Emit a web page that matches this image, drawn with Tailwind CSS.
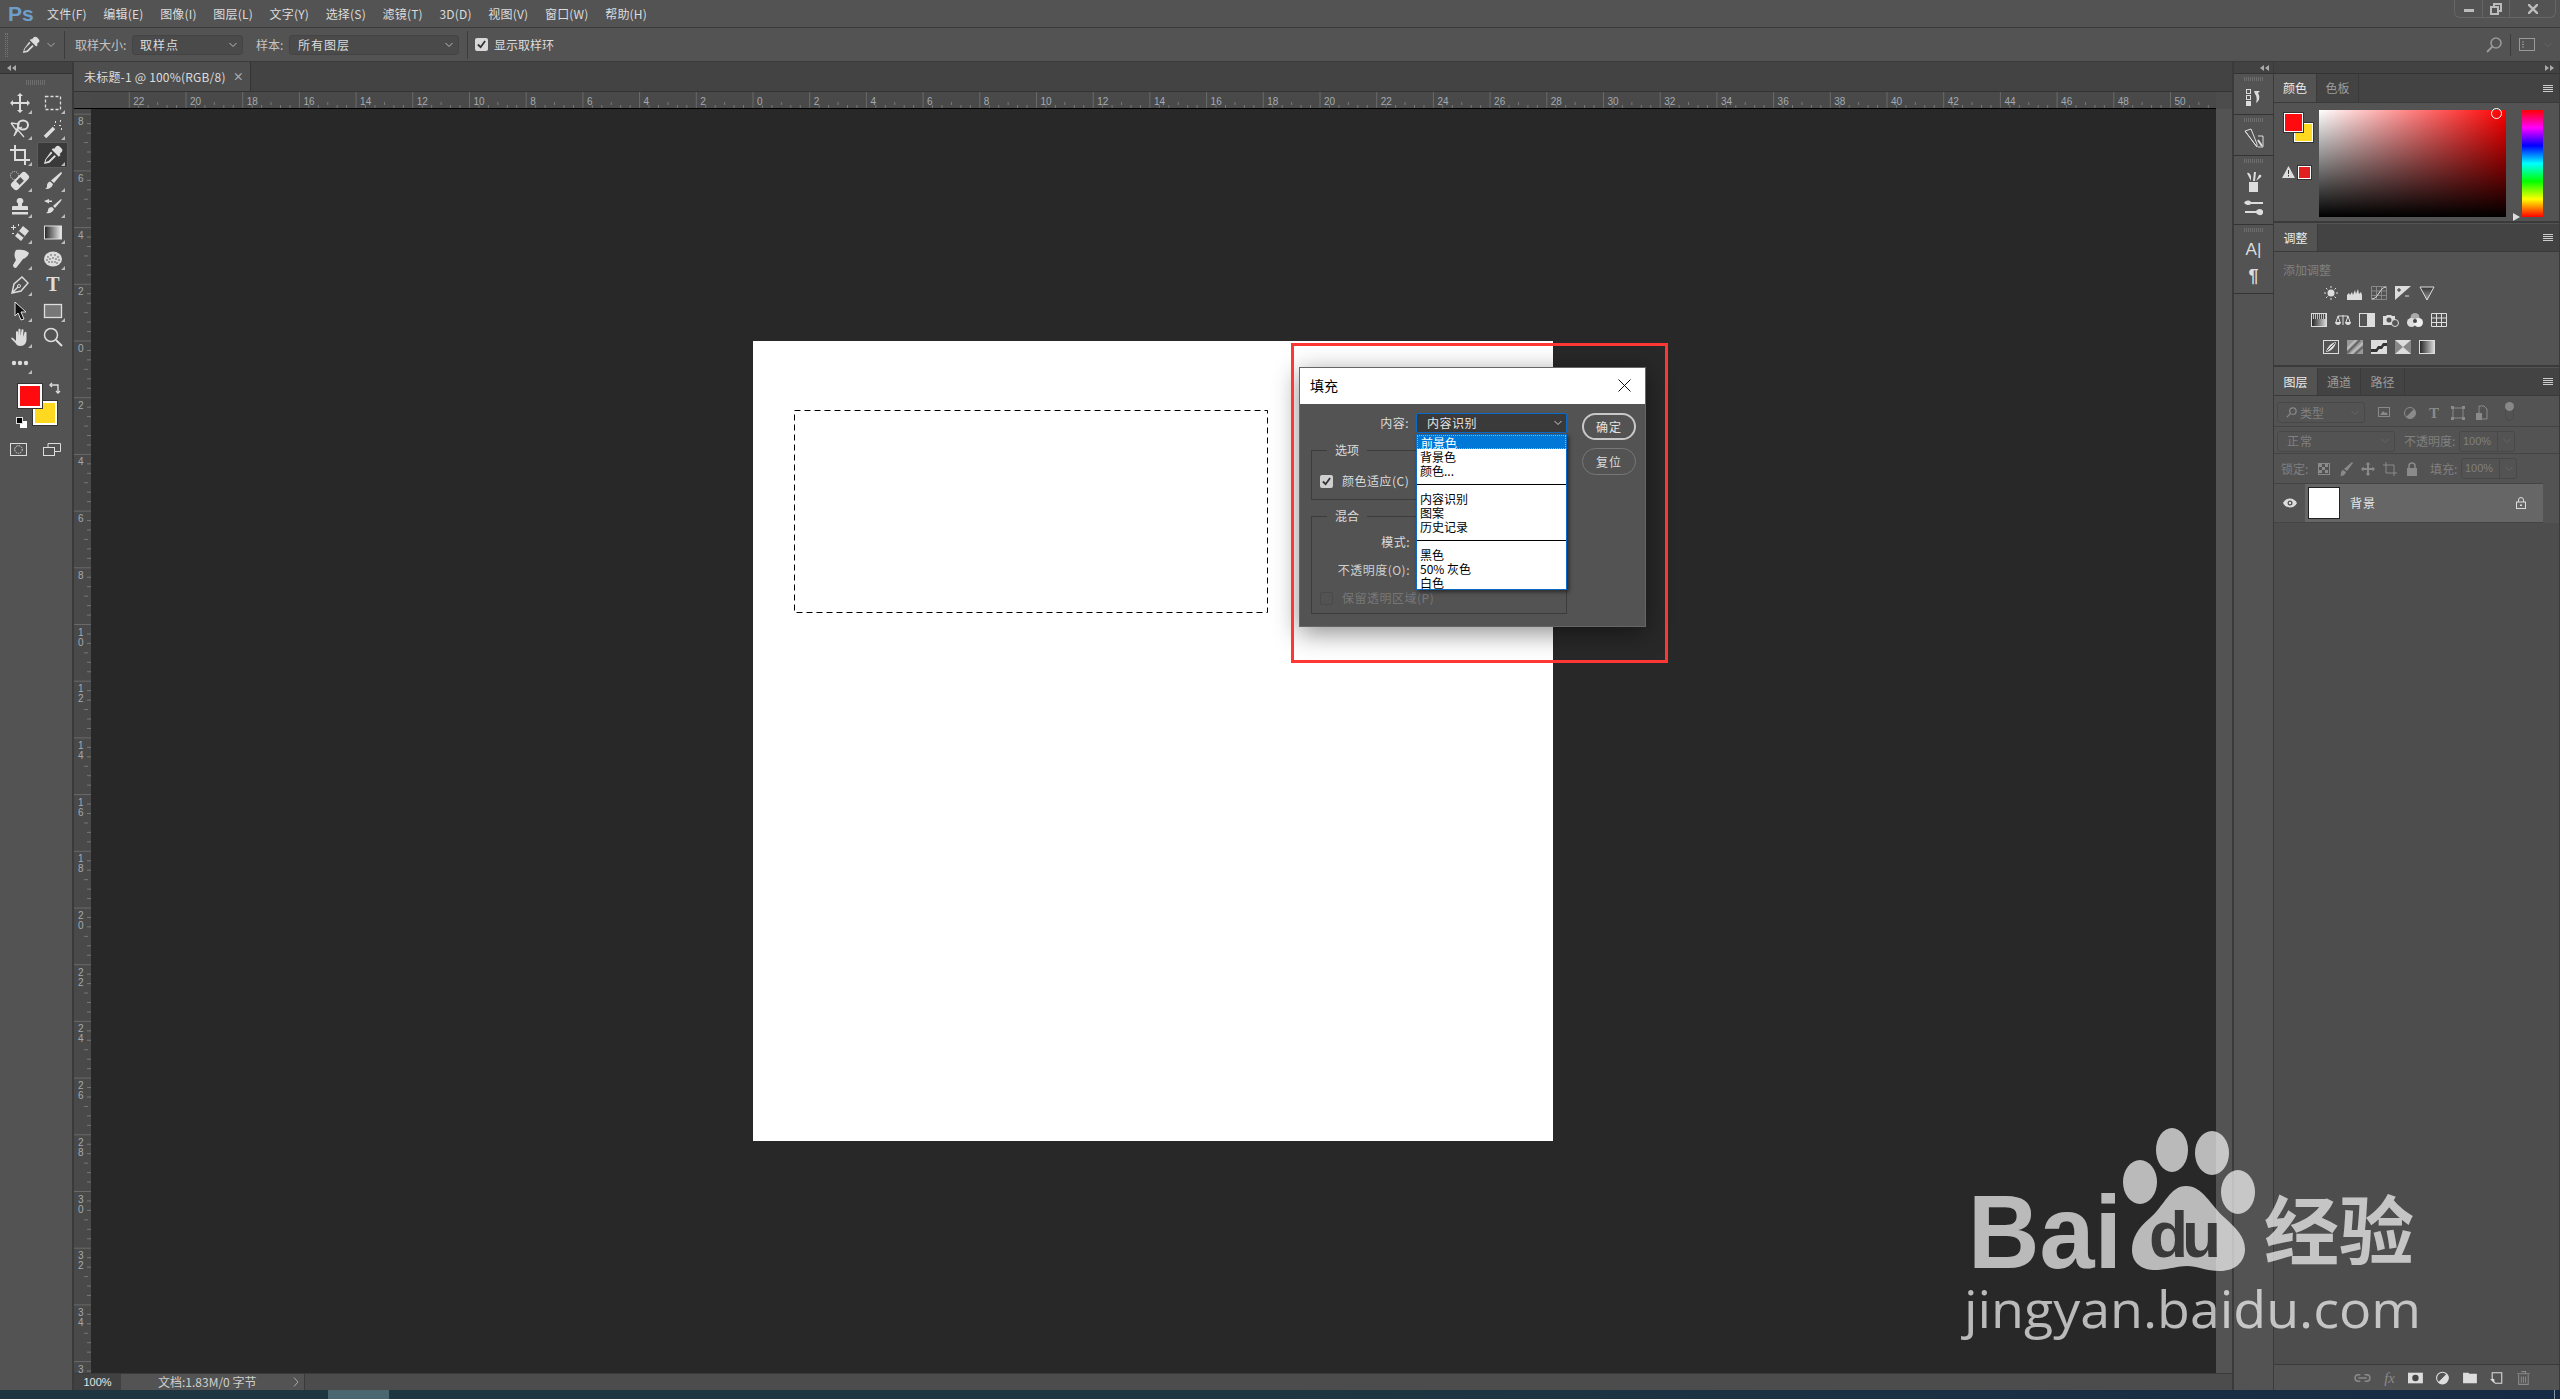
<!DOCTYPE html>
<html lang="zh-CN">
<head>
  <meta charset="UTF-8" />
  <title>Photoshop - 填充</title>
  <script src="https://cdn.jsdelivr.net/npm/@tailwindcss/browser@4"></script>
</head>
<body class="bg-[#535353] text-[#d6d6d6] text-[12px] font-['Noto_Sans_CJK_SC','Noto_Sans',sans-serif]">
<div class="relative flex h-[1399px] w-[2560px] flex-col overflow-hidden">

  <!-- Menu bar -->
  <header class="flex h-[28px] shrink-0 items-center border-b border-[#3a3a3a] bg-[#535353]">
    <div class="w-[47px] pl-[8px] font-['Liberation_Sans',sans-serif] text-[21px] leading-none font-bold text-[#6e9fcc]">Ps</div>
    <nav class="flex gap-[16.6px] text-[12px] tracking-[0.2px] text-[#dcdcdc]">
      <span>文件(F)</span><span>编辑(E)</span><span>图像(I)</span><span>图层(L)</span><span>文字(Y)</span><span>选择(S)</span><span>滤镜(T)</span><span>3D(D)</span><span>视图(V)</span><span>窗口(W)</span><span>帮助(H)</span>
    </nav>
    <div class="ml-auto mr-[4px] mb-[9px] flex h-[18px] w-[102px] rounded-b-md border border-t-0 border-[#666] text-[#bbb]">
      <div class="flex w-[28px] items-center justify-center border-r border-[#666]"><div class="mt-[4px] h-[3px] w-[10px] bg-[#bbb]"></div></div>
      <div class="flex w-[27px] items-center justify-center border-r border-[#666]">
        <svg class="h-[12px] w-[12px]" viewBox="0 0 12 12" fill="none" stroke="#bbb" stroke-width="2"><rect x="1" y="4" width="7" height="7"/><path d="M4 4V1h7v7H8"/></svg>
      </div>
      <div class="flex flex-1 items-center justify-center">
        <svg class="h-[10px] w-[10px]" viewBox="0 0 10 10" stroke="#bbb" stroke-width="2.4"><path d="M0 0l10 10M10 0L0 10"/></svg>
      </div>
    </div>
  </header>

  <!-- Options bar -->
  <section class="flex h-[34px] shrink-0 items-center border-b border-[#3a3a3a] bg-[#535353]">
    <div class="ml-[5px] h-[24px] w-[3px] border-x border-dotted border-[#777]"></div>
    <svg class="ml-[14px] h-[18px] w-[18px]" viewBox="0 0 20 20" fill="#dcdcdc"><path d="M13 1.500c1-1 2.600-1 3.600 0l2 2c1 1 1 2.500 0 3.500l-2 2 1 1-1.800 1.800-7-7L10 3l1 1z"/><path d="M8 6.500l1.400 1.400L3.500 14l-1 3 3-1 6-6 1.400 1.400-6.400 6.400L1 19l1.200-4.600z"/></svg>
    <svg class="ml-[7px] h-[6px] w-[8px]" viewBox="0 0 8 6" fill="none" stroke="#aaa"><path d="M.5 1L4 4.500 7.500 1"/></svg>
    <div class="ml-[9px] h-[28px] w-px bg-[#3c3c3c]"></div>
    <span class="ml-[10px] w-[52px] whitespace-nowrap pt-[1px] text-[#c4c4c4]">取样大小:</span>
    <div class="ml-[5px] flex h-[20px] w-[111px] items-center justify-between rounded-[3px] border border-[#444] bg-[#4a4a4a] pl-[7px] pr-[5px] text-[#dcdcdc]"><span class="tracking-[1px]">取样点</span><svg class="h-[6px] w-[8px]" viewBox="0 0 8 6" fill="none" stroke="#bbb"><path d="M.5 1L4 4.500 7.500 1"/></svg></div>
    <span class="ml-[13px] w-[28px] whitespace-nowrap pt-[1px] text-[#c4c4c4]">样本:</span>
    <div class="ml-[5px] flex h-[20px] w-[170px] items-center justify-between rounded-[3px] border border-[#444] bg-[#4a4a4a] pl-[8px] pr-[5px] text-[#dcdcdc]"><span class="tracking-[1px]">所有图层</span><svg class="h-[6px] w-[8px]" viewBox="0 0 8 6" fill="none" stroke="#bbb"><path d="M.5 1L4 4.500 7.500 1"/></svg></div>
    <div class="ml-[8px] h-[28px] w-px bg-[#3c3c3c]"></div>
    <div class="ml-[7px] flex h-[13px] w-[13px] items-center justify-center rounded-[2px] bg-[#d8d8d8]"><svg class="h-[9px] w-[9px]" viewBox="0 0 10 10" fill="none" stroke="#333" stroke-width="2"><path d="M1 5l3 3 5-7"/></svg></div>
    <span class="ml-[6px] pt-[1px] text-[#dcdcdc]">显示取样环</span>
    <svg class="ml-auto h-[16px] w-[16px]" viewBox="0 0 16 16" fill="none" stroke="#999" stroke-width="1.600"><circle cx="10" cy="6" r="5"/><path d="M6.500 9.500L1 15" stroke-width="2"/></svg>
    <div class="ml-[8px] h-[22px] w-px bg-[#3c3c3c]"></div>
    <svg class="ml-[8px] h-[13px] w-[16px]" viewBox="0 0 16 13" fill="none" stroke="#999"><rect x=".5" y=".5" width="15" height="12"/><path d="M3 4h2M3 6.500h2M3 9h2"/></svg>
    <svg class="ml-[9px] mr-[8px] h-[6px] w-[8px]" viewBox="0 0 8 6" fill="none" stroke="#666"><path d="M.5 1L4 4.500 7.500 1"/></svg>
  </section>

  <main class="flex min-h-0 flex-1">
    <!-- Tools -->
    <aside class="flex w-[72px] shrink-0 flex-col bg-[#535353]">
      <div class="flex h-[12px] shrink-0 items-center border-b border-[#333] bg-[#424242] pl-[7px]"><svg class="h-[6px] w-[9px]" viewBox="0 0 9 6" fill="#aaa"><path d="M4 0v6L0 3zM9 0v6L5 3z"/></svg></div>
      <div class="flex h-[16px] shrink-0 items-center justify-center"><div class="h-[5px] w-[20px] bg-[repeating-linear-gradient(to_right,#6e6e6e_0,#6e6e6e_1px,transparent_1px,transparent_2px)]"></div></div>
      <div id="tools" class="grid grid-cols-[33px_33px] pl-[3px]"></div>
      <!-- Foreground / background swatches -->
      <div class="relative mt-[8px] h-[50px] shrink-0">
        <div class="absolute left-[33px] top-[17px] h-[24px] w-[24px] border-2 border-white bg-[#ffd91f] outline outline-[#333]"></div>
        <div class="absolute left-[18px] top-0 h-[24px] w-[24px] border-2 border-white bg-[#ff0a0f] outline outline-[#333]"></div>
        <svg class="absolute left-[49px] top-[-2px] h-[12px] w-[12px]" viewBox="0 0 12 12" fill="none" stroke="#ddd" stroke-width="1.400"><path d="M1 3h8v8"/><path d="M3 1L1 3l2 2M7 9l2 2 2-2"/></svg>
        <div class="absolute left-[20px] top-[37px] h-[7px] w-[7px] bg-white"></div>
        <div class="absolute left-[16px] top-[33px] h-[7px] w-[7px] border border-[#ddd] bg-black"></div>
      </div>
      <div class="mt-[3px] flex h-[24px] items-center">
        <svg class="ml-[10px] h-[13px] w-[17px]" viewBox="0 0 17 13" fill="none" stroke="#ddd"><rect x=".5" y=".5" width="16" height="12"/><circle cx="8.500" cy="6.500" r="3.800" stroke-dasharray="1.500 1"/></svg>
        <svg class="ml-[16px] h-[13px] w-[18px]" viewBox="0 0 18 13" fill="none" stroke="#ddd"><rect x=".5" y="4.500" width="11" height="8"/><path d="M5 4V.5h12.500v8H12"/></svg>
      </div>
    </aside>
    <div class="w-[2px] shrink-0 bg-[#3a3a3a]"></div>

    <!-- Document area -->
    <div class="flex w-[2158px] shrink-0 flex-col">
      <div class="flex h-[30px] shrink-0 border-b border-[#333] bg-[#434343]">
        <div class="flex w-[177px] items-center border-r border-[#333] bg-[#4e4e4e] pl-[10px] text-[#dcdcdc]">
          <span class="whitespace-nowrap text-[12px] tracking-[0.2px]">未标题-1 @ 100%(RGB/8)</span>
          <span class="ml-[7px] text-[11px] font-bold text-[#aaa]">×</span>
        </div>
      </div>
      <div class="flex h-[17px] shrink-0">
        <div class="w-[17px] border-b border-black bg-[#4a4a4a]"></div>
        <div class="flex-1 overflow-hidden border-b border-black bg-[#494949]"><svg id="ruler-top" class="block h-[16px] w-[2125px]"></svg></div>
        <div class="w-[16px] bg-[#4c4c4c]"></div>
      </div>
      <div class="flex min-h-0 flex-1">
        <div class="w-[17px] overflow-hidden bg-[#494949]"><svg id="ruler-left" class="block h-[1264px] w-[17px]"></svg></div>
        <div class="flex-1 overflow-hidden bg-[#282828] pl-[662px] pt-[232px]">
          <div class="relative h-[800px] w-[800px] bg-white">
            <svg class="absolute left-[41px] top-[69px] h-[204px] w-[474px]" viewBox="0 0 474 204" fill="none" stroke="#000"><rect x=".5" y=".5" width="473" height="202" stroke-dasharray="6 4"/></svg>
          </div>
        </div>
        <div class="w-[16px] bg-[#535353]"></div>
      </div>
      <div class="flex h-[17px] shrink-0 border-t border-[#3a3a3a] bg-[#4c4c4c]">
        <div class="flex w-[47px] items-center justify-center bg-[#414141] font-['Liberation_Sans',sans-serif] text-[11px] text-[#e4e4e4]">100%</div>
        <div class="flex w-[184px] items-center border-r border-[#3a3a3a] bg-[#535353] pl-[37px] text-[#cfcfcf]">文档:1.83M/0 字节<svg class="ml-auto mr-[5px] h-[10px] w-[6px]" viewBox="0 0 6 10" fill="none" stroke="#aaa"><path d="M1 .5L5 5 1 9.500"/></svg></div>
      </div>
    </div>
    <div class="w-[2px] shrink-0 bg-[#3a3a3a]"></div>

    <!-- Collapsed dock -->
    <aside class="flex w-[39px] shrink-0 flex-col bg-[#535353]">
      <div class="flex h-[12px] shrink-0 items-center justify-end border-b border-[#333] bg-[#424242] pr-[4px]"><svg class="h-[6px] w-[9px]" viewBox="0 0 9 6" fill="#aaa"><path d="M4 0v6L0 3zM9 0v6L5 3z"/></svg></div>
      <div class="flex h-[41px] flex-col items-center border-b border-[#333] pt-[3px]">
        <div class="h-[4px] w-[19px] bg-[repeating-linear-gradient(to_right,#6e6e6e_0,#6e6e6e_1px,transparent_1px,transparent_2px)]"></div>
        <svg class="mt-[8px] h-[17px] w-[16px]" viewBox="0 0 16 17" fill="#ddd"><rect x=".5" y=".5" width="4" height="4" fill="none" stroke="#ddd"/><rect x=".5" y="6.500" width="4" height="4" fill="none" stroke="#ddd"/><rect x="0" y="12" width="5" height="5"/><path d="M8 2h6l-2 2c2 3 2 8-2 10 1-3 1-7-1-9z"/></svg>
      </div>
      <div class="flex h-[41px] flex-col items-center border-b border-[#333] pt-[3px]">
        <div class="h-[4px] w-[19px] bg-[repeating-linear-gradient(to_right,#6e6e6e_0,#6e6e6e_1px,transparent_1px,transparent_2px)]"></div>
        <svg class="mt-[6px] h-[20px] w-[20px]" viewBox="0 0 20 20" fill="none" stroke="#ddd"><path d="M1 3l6-2 6 15v3zM1 3l12 16M14 8h5v11h-5"/><path d="M14 12l4 6" stroke-width="2"/></svg>
      </div>
      <div class="flex h-[69px] flex-col items-center border-b border-[#333] pt-[3px]">
        <div class="h-[4px] w-[19px] bg-[repeating-linear-gradient(to_right,#6e6e6e_0,#6e6e6e_1px,transparent_1px,transparent_2px)]"></div>
        <svg class="mt-[8px] h-[21px] w-[16px]" viewBox="0 0 16 21" fill="#ddd"><rect x="3" y="11" width="9" height="10"/><path d="M5 10L1 2c2-1 3 1 4 3zM7 10l1-9 2 0-1 9zM10 10l3-6c2-1 3 1 2 2z"/></svg>
        <svg class="mt-[8px] h-[16px] w-[19px]" viewBox="0 0 19 16" fill="#ddd"><path d="M0 3c2-3 5-3 7-1h12v2H7C5 6 2 5 0 3zM19 13c-1 3-4 3-7 0H1v-2h11c3-3 6-2 7 0z"/></svg>
      </div>
      <div class="flex h-[69px] flex-col items-center border-b border-[#333] pt-[3px]">
        <div class="h-[4px] w-[19px] bg-[repeating-linear-gradient(to_right,#6e6e6e_0,#6e6e6e_1px,transparent_1px,transparent_2px)]"></div>
        <div class="mt-[6px] font-['Liberation_Sans',sans-serif] text-[17px] leading-[24px] text-[#ddd]">A<span class="font-thin">|</span></div>
        <div class="mt-[3px] font-['Liberation_Sans',sans-serif] text-[18px] leading-[22px] font-bold text-[#ddd]">¶</div>
      </div>
    </aside>
    <div class="w-px shrink-0 bg-[#3a3a3a]"></div>

    <!-- Panels -->
    <aside class="flex min-w-0 flex-1 flex-col border-r border-[#3a3a3a] bg-[#535353]">
      <div class="flex h-[12px] shrink-0 items-center justify-end border-b border-[#333] bg-[#424242] pr-[5px]"><svg class="h-[6px] w-[9px]" viewBox="0 0 9 6" fill="#aaa"><path d="M0 0v6l4-3zM5 0v6l4-3z"/></svg></div>

      <!-- Color -->
      <section class="h-[149px] shrink-0 border-b-2 border-[#3a3a3a]">
        <div class="flex h-[29px] items-stretch border-b border-[#3a3a3a] bg-[#434343]">
          <div class="flex w-[43px] items-center justify-center border-r border-[#3a3a3a] bg-[#535353] text-[#ececec]">颜色</div>
          <div class="flex w-[42px] items-center justify-center border-r border-[#3a3a3a] text-[#9c9c9c]">色板</div>
          <div class="ml-auto mr-[6px] flex flex-col justify-center gap-[1px]"><div class="h-px w-[10px] bg-[#ccc]"></div><div class="h-px w-[10px] bg-[#ccc]"></div><div class="h-px w-[10px] bg-[#ccc]"></div><div class="h-px w-[10px] bg-[#ccc]"></div></div>
        </div>
        <div class="flex pt-[7px]">
          <div class="relative w-[45px] shrink-0">
            <div class="absolute left-[20px] top-[13px] h-[19px] w-[19px] border border-white bg-[#ffd91f] outline outline-[#333]"></div>
            <div class="absolute left-[10px] top-[3px] h-[19px] w-[19px] border border-white bg-[#ff0a0f] outline outline-[#333]"></div>
            <svg class="absolute left-[8px] top-[56px] h-[12px] w-[13px]" viewBox="0 0 13 12" fill="#ddd"><path d="M6.500 0L13 12H0z"/><path d="M6 4h1v4H6zM6 9h1v1.500H6z" fill="#333"/></svg>
            <div class="absolute left-[24px] top-[56px] h-[13px] w-[13px] border border-white bg-[#e32020] outline outline-[#333]"></div>
          </div>
          <div class="relative h-[107px] w-[187px] shrink-0 bg-[linear-gradient(to_top,#000,transparent),linear-gradient(to_right,#fff,#f00)]">
            <div class="absolute left-[172px] top-[-2px] h-[11px] w-[11px] rounded-full border border-white"></div>
          </div>
          <div class="relative ml-[16px] h-[107px] w-[21px] shrink-0 bg-[linear-gradient(to_bottom,#f00,#f0f,#00f,#0ff,#0f0,#ff0,#f00)]">
            <div class="absolute left-[-9px] top-[103px] h-[8px] w-[7px] bg-[#ddd] [clip-path:polygon(0_0,100%_50%,0_100%)]"></div>
          </div>
        </div>
      </section>

      <!-- Adjustments -->
      <section class="mt-[1px] h-[143px] shrink-0 border-b-2 border-[#3a3a3a]">
        <div class="flex h-[28px] items-stretch border-b border-[#3a3a3a] bg-[#434343]">
          <div class="flex w-[44px] items-center justify-center border-r border-[#3a3a3a] bg-[#535353] pt-[1px] text-[#ececec]">调整</div>
          <div class="ml-auto mr-[6px] flex flex-col justify-center gap-[1px]"><div class="h-px w-[10px] bg-[#ccc]"></div><div class="h-px w-[10px] bg-[#ccc]"></div><div class="h-px w-[10px] bg-[#ccc]"></div><div class="h-px w-[10px] bg-[#ccc]"></div></div>
        </div>
        <div class="pl-[9px] pt-[10px] text-[#808080] leading-[16px]">添加调整</div>
        <div id="adj" class="mt-[8px] flex flex-col gap-[13px]"></div>
      </section>

      <!-- Layers -->
      <section class="mt-[1px] flex min-h-0 flex-1 flex-col">
        <div class="flex h-[28px] shrink-0 items-stretch border-b border-[#3a3a3a] bg-[#434343]">
          <div class="flex w-[44px] items-center justify-center border-r border-[#3a3a3a] bg-[#535353] text-[#ececec]">图层</div>
          <div class="flex w-[43px] items-center justify-center border-r border-[#3a3a3a] text-[#9c9c9c]">通道</div>
          <div class="flex w-[44px] items-center justify-center border-r border-[#3a3a3a] text-[#9c9c9c]">路径</div>
          <div class="ml-auto mr-[6px] flex flex-col justify-center gap-[1px]"><div class="h-px w-[10px] bg-[#ccc]"></div><div class="h-px w-[10px] bg-[#ccc]"></div><div class="h-px w-[10px] bg-[#ccc]"></div><div class="h-px w-[10px] bg-[#ccc]"></div></div>
        </div>
        <div class="flex h-[31px] shrink-0 items-center border-b border-[#444] pl-[3px] pt-[3px]">
          <div class="flex h-[21px] w-[88px] items-center gap-[3px] rounded-[3px] border border-[#484848] pl-[8px] text-[#808080]">
            <svg class="h-[11px] w-[11px]" viewBox="0 0 12 12" fill="none" stroke="#888" stroke-width="1.400"><circle cx="7.500" cy="4.500" r="3.500"/><path d="M5 7l-4 4"/></svg><span>类型</span>
            <svg class="ml-auto mr-[5px] h-[6px] w-[8px]" viewBox="0 0 8 6" fill="none" stroke="#666"><path d="M.5 1L4 4.500 7.500 1"/></svg>
          </div>
          <div id="filters" class="ml-[13px] flex items-center gap-[8px]"></div>
          <div class="relative ml-[15px] h-[17px] w-[9px] rounded-full border border-[#4a4a4a]"><div class="absolute left-[-1px] top-[-3px] h-[9px] w-[9px] rounded-full bg-[#888]"></div></div>
        </div>
        <div class="flex h-[27px] shrink-0 items-center border-b border-[#444] pl-[3px] pt-[2px] text-[#808080]">
          <div class="flex h-[21px] w-[118px] items-center justify-between rounded-[3px] border border-[#484848] pl-[9px] pr-[5px]"><span class="tracking-[1px]">正常</span><svg class="h-[6px] w-[8px]" viewBox="0 0 8 6" fill="none" stroke="#666"><path d="M.5 1L4 4.500 7.500 1"/></svg></div>
          <span class="ml-[9px] w-[55px] whitespace-nowrap">不透明度:</span>
          <div class="flex h-[21px] w-[56px] items-center rounded-[3px] border border-[#484848] font-['Liberation_Sans',sans-serif] text-[11px]"><span class="w-[38px] border-r border-[#484848] pl-[3px] leading-[19px]">100%</span><svg class="ml-[5px] h-[6px] w-[8px]" viewBox="0 0 8 6" fill="none" stroke="#666"><path d="M.5 1L4 4.500 7.500 1"/></svg></div>
        </div>
        <div class="flex h-[29px] shrink-0 items-center pl-[7px] text-[#808080]">
          <span class="w-[36px] whitespace-nowrap">锁定:</span>
          <div id="locks" class="flex items-center gap-[8px]"></div>
          <span class="ml-[11px] w-[31px] whitespace-nowrap">填充:</span>
          <div class="flex h-[21px] w-[56px] items-center rounded-[3px] border border-[#484848] font-['Liberation_Sans',sans-serif] text-[11px]"><span class="w-[38px] border-r border-[#484848] pl-[3px] leading-[19px]">100%</span><svg class="ml-[5px] h-[6px] w-[8px]" viewBox="0 0 8 6" fill="none" stroke="#666"><path d="M.5 1L4 4.500 7.500 1"/></svg></div>
        </div>
        <div class="flex h-[40px] w-[269px] shrink-0 items-stretch border-y border-[#444]">
          <div class="flex w-[31px] items-center justify-center">
            <svg class="h-[10px] w-[14px]" viewBox="0 0 14 10" fill="#ddd"><path d="M0 5c3-6 11-6 14 0-3 6-11 6-14 0z"/><circle cx="7" cy="5" r="2.500" fill="#535353"/><circle cx="7" cy="5" r="1.200"/></svg>
          </div>
          <div class="flex flex-1 items-center bg-[#666]">
            <div class="ml-[3px] h-[32px] w-[32px] border border-[#222] bg-white"></div>
            <span class="ml-[10px] tracking-[1px] text-[#e8e8e8]">背景</span>
            <svg class="ml-auto mr-[17px] h-[12px] w-[10px]" viewBox="0 0 10 12" fill="none" stroke="#ddd"><path d="M2.500 5V3a2.500 2.500 0 015 0v2"/><rect x=".5" y="5" width="9" height="6.500"/><path d="M5 7.500v1.500" stroke-width="2"/></svg>
          </div>
        </div>
        <div class="flex-1 bg-[#4d4d4d]"></div>
        <div id="layer-actions" class="flex h-[26px] shrink-0 items-center justify-end gap-[10px] border-t border-[#3a3a3a] pr-[26px]"></div>
      </section>
    </aside>
  </main>

  <!-- Windows taskbar, mostly cut off -->
  <footer class="relative flex h-[9px] shrink-0 overflow-hidden bg-[linear-gradient(to_right,#1e3641,#1e3641_50%,#172a45)]">
    <div class="ml-[328px] h-full w-[61px] bg-[#4a6670]"></div>
    <span class="absolute left-[2377px] top-[7px] font-['Liberation_Sans',sans-serif] text-[14px] leading-[16px] text-white">20:20</span>
    <div class="absolute left-[2554px] top-0 h-full w-px bg-[#8892a0]"></div>
  </footer>

  <!-- Fill dialog -->
  <div class="absolute left-[1299px] top-[367px] h-[260px] w-[347px] border border-[#666] bg-[#535353] shadow-[0_6px_24px_rgba(0,0,0,0.45)]">
    <div class="flex h-[36px] items-center justify-between bg-white pb-[1px] pl-[10px] pr-[14px] text-[14px] text-black">
      <span>填充</span>
      <svg class="h-[13px] w-[13px]" viewBox="0 0 13 13" stroke="#111"><path d="M.5.500l12 12M12.500.500l-12 12"/></svg>
    </div>
    <div class="flex pl-[11px] pt-[9px]">
      <div class="relative w-[256px]">
        <div class="flex h-[20px] items-center">
          <span class="w-[98px] text-right tracking-[0.5px] text-[#dcdcdc]">内容:</span>
          <div class="ml-[7px] flex h-[20px] w-[151px] items-center justify-between rounded-[2px] border border-[#0a6ac8] bg-[#3a3a3a] pl-[10px] pr-[4px] tracking-[0.5px] text-[#e4e4e4]"><span>内容识别</span><svg class="h-[6px] w-[8px]" viewBox="0 0 8 6" fill="none" stroke="#ccc"><path d="M.5 1L4 4.500 7.500 1"/></svg></div>
        </div>
        <fieldset class="relative mt-[17px] h-[50px] border border-[#3c3c3c]">
          <span class="absolute left-[15px] top-[-10px] bg-[#535353] px-[8px] text-[#dcdcdc]">选项</span>
          <div class="flex items-center pl-[8px] pt-[21px]">
            <div class="flex h-[13px] w-[13px] items-center justify-center rounded-[2px] bg-[#cfcfcf]"><svg class="h-[9px] w-[9px]" viewBox="0 0 10 10" fill="none" stroke="#333" stroke-width="2"><path d="M1 5l3 3 5-7"/></svg></div>
            <span class="ml-[9px] tracking-[0.5px] text-[#dcdcdc]">颜色适应(C)</span>
          </div>
        </fieldset>
        <fieldset class="relative mt-[16px] h-[98px] border border-[#3c3c3c]">
          <span class="absolute left-[15px] top-[-10px] bg-[#535353] px-[8px] text-[#dcdcdc]">混合</span>
          <div class="w-[98px] pt-[16px] text-right tracking-[0.5px] text-[#dcdcdc]">模式:</div>
          <div class="w-[98px] whitespace-nowrap pt-[10px] text-right tracking-[0.5px] text-[#cfcfcf]">不透明度(O):</div>
          <div class="flex items-center pl-[8px] pt-[10px]">
            <div class="h-[13px] w-[13px] rounded-[2px] border border-[#4a4a4a]"></div>
            <span class="ml-[9px] tracking-[0.5px] text-[#777]">保留透明区域(P)</span>
          </div>
        </fieldset>
        <!-- Open dropdown -->
        <div class="absolute left-[105px] top-[21px] h-[156px] w-[151px] overflow-hidden border border-[#0a6ac8] bg-white text-[12px] leading-[14px] text-black shadow-[2px_2px_4px_rgba(0,0,0,0.5)]">
          <div class="h-[14px] border border-dotted border-[#f5a623] bg-[#0078d7] pl-[3px] leading-[14px] text-white">前景色</div>
          <div class="pl-[3px] pt-[1px]">背景色</div>
          <div class="pl-[3px]">颜色...</div>
          <div class="mb-[7px] mt-[6px] h-px bg-black"></div>
          <div class="pl-[3px]">内容识别</div>
          <div class="pl-[3px]">图案</div>
          <div class="pl-[3px]">历史记录</div>
          <div class="mb-[7px] mt-[6px] h-px bg-black"></div>
          <div class="pl-[3px]">黑色</div>
          <div class="pl-[3px]">50% 灰色</div>
          <div class="pl-[3px]">白色</div>
        </div>
      </div>
      <div class="ml-[15px] flex w-[54px] flex-col gap-[8px]">
        <div class="flex h-[27px] items-center justify-center rounded-full border-2 border-[#c8c8c8] tracking-[1px] text-[#e4e4e4]">确定</div>
        <div class="flex h-[27px] items-center justify-center rounded-full border border-[#777] tracking-[1px] text-[#dcdcdc]">复位</div>
      </div>
    </div>
  </div>

  <!-- Red highlight added to the screenshot -->
  <div class="absolute left-[1291px] top-[343px] h-[320px] w-[377px] border-[3px] border-[#ff3636]"></div>

  <!-- Watermark -->
  <svg class="absolute left-[1960px] top-[1125px] h-[225px] w-[470px]" viewBox="1960 1125 470 225">
    <g fill="#fff" opacity="0.68">
      <text x="1968" y="1268" font-family="Liberation Sans" font-weight="700" font-size="104" textLength="154" lengthAdjust="spacingAndGlyphs">Bai</text>
      <ellipse cx="2140" cy="1182" rx="17" ry="22"/>
      <ellipse cx="2172" cy="1150" rx="16" ry="22"/>
      <ellipse cx="2212" cy="1153" rx="17" ry="22"/>
      <ellipse cx="2238" cy="1192" rx="17" ry="22"/>
      <path d="M2186 1186C2170 1186 2165 1205 2150 1218C2138 1228 2132 1238 2132 1250C2132 1265 2145 1271 2158 1270C2170 1269 2178 1266 2187 1266C2197 1266 2206 1271 2220 1271C2235 1271 2245 1262 2245 1249C2245 1237 2236 1228 2225 1218C2210 1205 2203 1186 2186 1186Z"/>
      <text x="2264" y="1259" font-family="Noto Sans CJK SC" font-weight="700" font-size="75">经验</text>
      <text x="1964" y="1328" font-family="Open Sans" font-size="52" textLength="457" lengthAdjust="spacingAndGlyphs">jingyan.baidu.com</text>
    </g>
    <text x="2149" y="1257" font-family="Liberation Sans" font-weight="700" font-size="64" fill="#3a3a3a" textLength="72">du</text>
  </svg>
</div>

<script>
  // tool icons, [inner svg, has flyout corner]
  const s = 'fill="none" stroke="#ddd"';
  const tools = [
    ['<path fill="#ddd" d="M10 0l3 3h-2v6h6V7l3 3-3 3v-2h-6v6h2l-3 3-3-3h2v-6H3v2l-3-3 3-3v2h6V3H7z"/>', 1],
    [`<rect x="2.500" y="3.500" width="15" height="13" ${s} stroke-width="1.300" stroke-dasharray="3 2"/>`, 1],
    [`<path ${s} stroke-width="1.300" d="M1 4l8 1-5 12 4-6 6 7M1 4l5 7 6-3"/><ellipse cx="13" cy="6" rx="5" ry="4.500" ${s} stroke-width="2"/>`, 1],
    ['<path stroke="#ddd" stroke-width="3.500" d="M2 18l9-9"/><path fill="#ddd" d="M12 2h1v2h-1zM17 1h1v2h-1zM16 6h2v1h-2zM11 6h1v1h-1zM18 9h1v2h-1z"/>', 1],
    [`<path ${s} stroke-width="2" d="M5 0v15h15M0 5h15v15"/>`, 1],
    ['<path fill="#ddd" d="M13 1.500c1-1 2.600-1 3.600 0l2 2c1 1 1 2.500 0 3.500l-2 2 1 1-1.800 1.800-7-7L10 3l1 1z"/><path fill="#ddd" d="M8 6.500l1.400 1.400L3.500 14l-1 3 3-1 6-6 1.400 1.400-6.400 6.400L1 19l1.200-4.600z"/>', 1],
    ['<g transform="rotate(-45 10 10)"><rect x="0" y="5.500" width="20" height="9" rx="3" fill="#ddd"/><rect x="7" y="7.500" width="6" height="5" fill="#555"/></g><circle cx="4.500" cy="4.500" r="4" fill="none" stroke="#ddd" stroke-dasharray="1 1"/>', 1],
    ['<path fill="#ddd" d="M18 1c1 0 1 1 .5 2L11 12l-3-2.500zM7 10.500l3 2.500c-1 4-5 5.500-8 5 2-1 2-2 2-3.500 0-2 1.500-3.500 3-4z"/>', 1],
    ['<path fill="#ddd" d="M10 1a3 3 0 012 5.500V9h5a1 1 0 011 1v3H2v-3a1 1 0 011-1h5V6.500A3 3 0 0110 1zM2 15h16v2.500H2z"/>', 1],
    ['<path fill="#ddd" d="M18 2c1 0 .5 1 0 2l-6 7-2-2zM9 10l2 2c-1 3-4 5-8 4 2-1 2-2 2-3 0-2 2-3 4-3zM1 4l5-2v1.500h3V5H6v1.500z"/>', 1],
    ['<path fill="#ddd" d="M13 3l6 5-8 10-6-5z"/><path fill="#555" d="M9 8l6 5 -1.500 1.800-6-5z"/><path fill="#ddd" d="M3 2h1v2h2v1H4v2H3V5H1V4h2zM8 1h1v2H8zM2 10h2v1H2z"/>', 1],
    ['<defs><linearGradient id="gr"><stop offset="0" stop-color="#222"/><stop offset="1" stop-color="#eee"/></linearGradient></defs><rect x="1.500" y="3" width="17" height="13" fill="url(#gr)" stroke="#ddd"/>', 1],
    ['<path fill="#ddd" d="M6 1c5-1 11 0 13 3-1 3-3 5-6 6l-3 4-4 5c-2 0-3-1-3-3l3-5c-2-4-2-7 0-10z"/>', 1],
    ['<ellipse cx="10" cy="10" rx="9" ry="7.500" fill="#ddd"/><g fill="#555"><circle cx="5" cy="8" r=".8"/><circle cx="8" cy="6" r=".8"/><circle cx="12" cy="6" r=".8"/><circle cx="15" cy="8" r=".8"/><circle cx="4" cy="11" r=".8"/><circle cx="7" cy="10" r=".8"/><circle cx="10" cy="9" r=".8"/><circle cx="13" cy="10" r=".8"/><circle cx="16" cy="11" r=".8"/><circle cx="6" cy="13" r=".8"/><circle cx="9" cy="13" r=".8"/><circle cx="12" cy="13" r=".8"/><circle cx="14" cy="14" r=".8"/></g>', 1],
    [`<path ${s} stroke-width="1.400" d="M2 18l2-9 8-7 6 6-7 8zM2 18l6-6"/><circle cx="9" cy="11" r="1.500" ${s}/>`, 1],
    ['<text x="10" y="16" text-anchor="middle" font-family="Liberation Serif" font-weight="700" font-size="20" fill="#ddd">T</text>', 0],
    ['<path fill="#111" stroke="#ddd" d="M5 1l11 10h-5l3 7-3 1-3-7-3 3z"/>', 1],
    ['<rect x="1.500" y="3.500" width="17" height="13" fill="#777" stroke="#ddd" stroke-width="1.300"/>', 1],
    ['<path fill="#ddd" d="M3 11l3 3V5c0-1 2-1 2 0v4l.5-6.500c0-1 2-1 2 0V9l1-6c0-1 2-1 2 0l-.5 7 1.500-4.500c0-1 2-1 2 0V12c0 4-2 7-6 7-3 0-4-1-5-3l-4-4c-.5-1 .5-2 1-1z"/>', 1],
    [`<circle cx="8" cy="8" r="6.500" ${s} stroke-width="1.500"/><path stroke="#ddd" stroke-width="2" d="M13 13l6 6"/>`, 0],
    ['<circle cx="4" cy="10" r="2.200" fill="#ddd"/><circle cx="10" cy="10" r="2.200" fill="#ddd"/><circle cx="16" cy="10" r="2.200" fill="#ddd"/>', 1]
  ];

  const toolGrid = document.getElementById('tools');
  tools.forEach((tool, i) => {
    const cell = document.createElement('div');
    cell.className = 'relative flex h-[26px] items-center justify-center';
    const active = i === 5 ? '<div class="absolute inset-x-[1px] inset-y-0 rounded-[2px] border border-[#5c5c5c] bg-[#3a3a3a]"></div>' : '';
    const corner = tool[1] ? '<span class="absolute bottom-[2px] right-[4px] h-0 w-0 border-b-[4px] border-l-[4px] border-b-[#bbb] border-l-transparent"></span>' : '';
    cell.innerHTML = `${active}<svg class="relative h-[20px] w-[20px]" viewBox="0 0 20 20">${tool[0]}</svg>${corner}`;
    toolGrid.appendChild(cell);
  });

  // adjustment icons, three centred rows
  const w = 'fill="#ddd"';
  const o = 'fill="none" stroke="#ddd"';
  const grad = '<defs><linearGradient id="ga"><stop offset="0" stop-color="#222"/><stop offset="1" stop-color="#ddd"/></linearGradient></defs>';
  const adjRows = [
    ['pl-[49px]', [
      `<circle cx="8" cy="7" r="3.500" ${w}/><path stroke="#ddd" d="M8 0v2M8 12v2M1 7h2M13 7h2M3 2l1.500 1.500M13 2l-1.500 1.500M3 12l1.500-1.500M13 12l-1.500-1.500"/>`,
      `<path ${w} d="M0 14V9l2-2 1 2 2-3 1 3 2-5 1 4 2-5 1 5 2-2 1 3v5z"/>`,
      `<path fill="none" stroke="#888" d="M.5.500h15v13H.5zM5.500.500v13M10.500.500v13M.5 5h15M.5 9.500h15"/><path ${o} d="M1 13C7 13 9 1 15 1"/>`,
      `<rect width="16" height="14" ${w}/><path fill="#555" d="M16 0v14H0z"/><path stroke="#333" d="M2 4h4M4 2v4"/><path stroke="#ddd" d="M10 10h4"/>`,
      `<defs><linearGradient id="gt" x2="0" y2="1"><stop offset="0" stop-color="#333"/><stop offset="1" stop-color="#999"/></linearGradient></defs><path fill="url(#gt)" stroke="#ddd" d="M1 1h14L8 14z"/>`
    ]],
    ['pl-[37px]', [
      `<rect x=".5" y=".5" width="15" height="13" fill="url(#ga)" stroke="#ddd"/><rect x="1" y="1" width="14" height="5" fill="#bbb"/><path stroke="#444" stroke-dasharray="1 1" d="M1 3.500h14" stroke-width="5"/>`,
      `<path ${o} d="M8 2v10M3 3h10M3 3L1 9M3 3l2 6M13 3l-2 6M13 3l2 6"/><path ${w} d="M0 9h6c0 4-6 4-6 0zM10 9h6c0 4-6 4-6 0z"/>`,
      `<rect x=".5" y=".5" width="15" height="13" fill="none" stroke="#ddd"/><rect x="8" y="0" width="8" height="14" ${w}/>`,
      `<path ${w} d="M0 3h3l1-1h4l1 1h3v9H0z"/><circle cx="6" cy="7" r="2.500" fill="#555"/><circle cx="12" cy="10" r="3.500" fill="#555" stroke="#ddd"/>`,
      `<circle cx="8" cy="4.500" r="4.500" fill="#aaa"/><circle cx="4.500" cy="9.500" r="4.500" fill="#ddd"/><circle cx="11.500" cy="9.500" r="4.500" fill="#eee"/><circle cx="8" cy="8" r="2" fill="#444"/>`,
      `<path ${o} d="M.5.500h15v13H.5zM5.500.500v13M10.500.500v13M.5 5h15M.5 9.500h15"/>`
    ]],
    ['pl-[49px]', [
      `<rect x=".5" y=".5" width="15" height="13" fill="#555" stroke="#ddd"/><path ${w} d="M3 12c1-5 5-9 10-10-1 5-4 9-10 10z"/><path stroke="#555" d="M4 11l8-8"/>`,
      `<rect width="16" height="14" fill="#999"/><path stroke="#bbb" stroke-width="2" d="M0 9l9-9M4 14L16 3"/><path stroke="#666" stroke-width="2" d="M0 13L13 0M8 14l8-7"/>`,
      `<rect width="16" height="14" ${w}/><path fill="#333" d="M0 9h5l2-3h3l2-3h4v3h-3l-2 3H8l-2 3H0z"/>`,
      `<rect width="16" height="14" fill="#888"/><path ${w} d="M0 0h16L8 7zM0 14h16L8 7z"/>`,
      `<defs><linearGradient id="gb"><stop offset="0" stop-color="#222"/><stop offset="1" stop-color="#ddd"/></linearGradient></defs><rect x=".5" y=".5" width="15" height="13" fill="url(#gb)" stroke="#ddd"/>`
    ]]
  ];
  const adj = document.getElementById('adj');
  adjRows.forEach((row, r) => {
    const div = document.createElement('div');
    div.className = 'flex gap-[8px] ' + row[0];
    div.innerHTML = row[1].map(icon => `<svg class="h-[14px] w-[16px]" viewBox="0 0 16 14">${r === 1 ? grad : ''}${icon}</svg>`).join('');
    adj.appendChild(div);
  });

  // dimmed layer filter + lock icons
  const dim = '#8a8a8a';
  document.getElementById('filters').innerHTML = [
    `<rect x=".5" y="2.500" width="11" height="9" fill="none" stroke="${dim}"/><path fill="${dim}" d="M2 10l3-4 2 2 1-1 2 3z"/>`,
    `<circle cx="8" cy="8" r="5.500" fill="none" stroke="${dim}"/><path fill="${dim}" d="M12 4L4 12a5.500 5.500 0 008-8z"/>`,
    `<text x="8" y="13" text-anchor="middle" font-family="Liberation Serif" font-weight="700" font-size="15" fill="${dim}">T</text>`,
    `<rect x="3" y="3" width="10" height="10" fill="none" stroke="${dim}"/><path fill="${dim}" d="M1 1h3v3H1zM12 1h3v3h-3zM1 12h3v3H1zM12 12h3v3h-3z"/>`,
    `<path fill="none" stroke="${dim}" d="M5 1h5l3 3v10H5z"/><rect x="2" y="8" width="6" height="7" fill="${dim}"/>`
  ].map(icon => `<svg class="h-[16px] w-[16px]" viewBox="0 0 16 16">${icon}</svg>`).join('');
  document.getElementById('locks').innerHTML = [
    `<rect x="1.500" y="1.500" width="11" height="11" fill="none" stroke="${dim}"/><path fill="${dim}" d="M2 2h3v3H2zM8 2h3v3H8zM5 5h3v3H5zM2 8h3v3H2zM8 8h3v3H8z"/>`,
    `<path fill="${dim}" d="M13 0l1 1-6 8-3-2zM4 8l3 2c-1 3-3 4-6 4 1-1 1-2 1-3s1-3 2-3z"/>`,
    `<path fill="${dim}" d="M7 0l2.500 2.500H8V6h3.500V4.500L14 7l-2.500 2.500V8H8v3.500h1.500L7 14l-2.500-2.500H6V8H2.500v1.500L0 7l2.500-2.500V6H6V2.500H4.500z"/>`,
    `<path fill="none" stroke="${dim}" d="M3 0v11h11M0 3h11v11"/>`,
    `<path fill="none" stroke="${dim}" stroke-width="1.500" d="M4 6V4a3 3 0 016 0v2"/><rect x="2" y="6" width="10" height="8" fill="${dim}"/>`
  ].map(icon => `<svg class="h-[14px] w-[14px]" viewBox="0 0 14 14">${icon}</svg>`).join('');

  // bottom of layers panel
  document.getElementById('layer-actions').innerHTML = [
    `<path fill="none" stroke="#8a8a8a" stroke-width="1.400" d="M6 4H4a3 3 0 000 6h2M10 4h2a3 3 0 010 6h-2M4 7h8"/>`,
    `<text x="8" y="12" text-anchor="middle" font-family="Liberation Serif" font-style="italic" font-size="14" fill="#8a8a8a">fx</text>`,
    `<rect y="2" width="14" height="10" fill="#ddd"/><circle cx="7" cy="7" r="3" fill="#444"/>`,
    `<circle cx="7" cy="7" r="5.500" fill="none" stroke="#ddd"/><path fill="#ddd" d="M11 3L3 11a5.500 5.500 0 008-8z"/>`,
    `<path fill="#ddd" d="M1 2h5l1 1h7v9H1z"/>`,
    `<path fill="none" stroke="#ddd" d="M3 2h9v10H6l-3-3z"/><path fill="#ddd" d="M1 8h4v4z"/>`,
    `<path fill="none" stroke="#8a8a8a" d="M2.500 4v9h9V4M1 3h12M5 1h4v2M5 5.500v6M7 5.500v6M9 5.500v6"/>`
  ].map(icon => `<svg class="h-[16px] w-[17px]" viewBox="0 0 16 14">${icon}</svg>`).join('');

  // rulers: 28.35px per cm, zero at the page's corner
  const cm = 28.35;
  let topTicks = '';
  for (let n = -22; n <= 52; n += 2) {
    const x = 662 + n * cm;
    topTicks += `<path stroke="#6a6a6a" d="M${x} 0v16"/><text x="${x + 4}" y="13" font-family="Liberation Sans" font-size="10" fill="#a3a9b2">${Math.abs(n)}</text>`;
    for (let k = 1; k < 6; k++) {
      const tx = x + k * cm / 3;
      topTicks += `<path stroke="#777" d="M${tx} ${k === 3 ? 10 : 13}v3"/>`;
    }
  }
  document.getElementById('ruler-top').innerHTML = topTicks;

  let leftTicks = '';
  for (let n = -8; n <= 36; n += 2) {
    const y = 232 + n * cm;
    leftTicks += `<path stroke="#6a6a6a" d="M0 ${y}h17"/>`;
    String(Math.abs(n)).split('').forEach((digit, d) => {
      leftTicks += `<text x="4" y="${y + 11 + d * 10}" font-family="Liberation Sans" font-size="10" fill="#a3a9b2">${digit}</text>`;
    });
    for (let k = 1; k < 6; k++) {
      const ty = y + k * cm / 3;
      leftTicks += `<path stroke="#777" d="M${k === 3 ? 10 : 13} ${ty}h4"/>`;
    }
  }
  document.getElementById('ruler-left').innerHTML = leftTicks;
</script>
</body>
</html>
